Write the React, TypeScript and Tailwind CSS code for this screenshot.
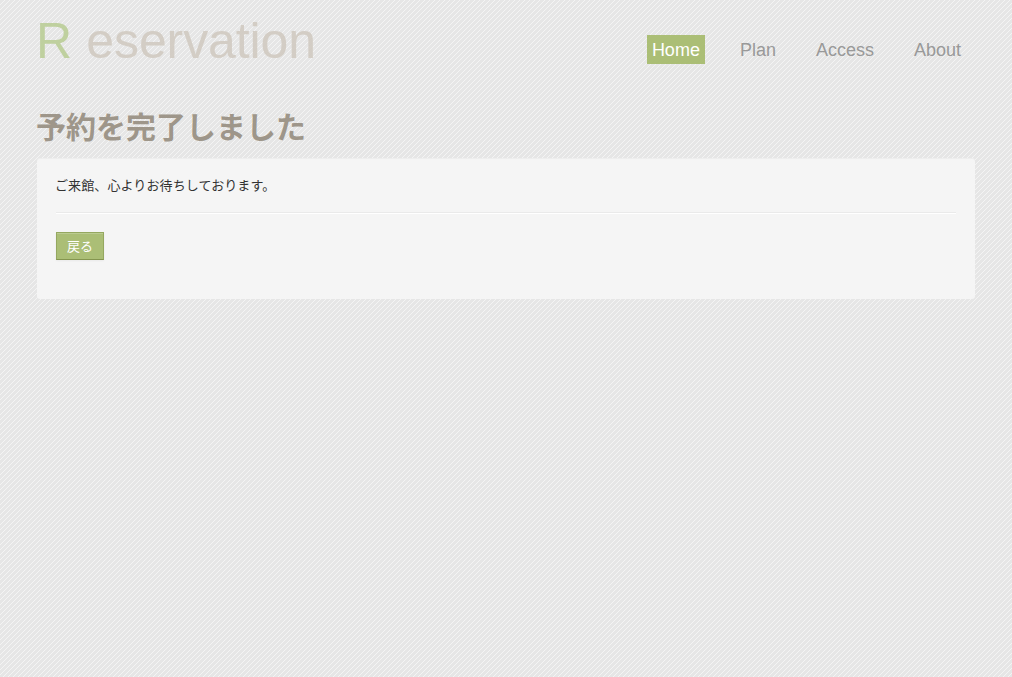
const links = ["Home", "Plan", "Access", "About"];

export default function App() {
  return (
    <div className="min-h-[677px] bg-[#e6e6e6] bg-[linear-gradient(135deg,#e6e6e6_0_3.2px,#f4f4f4_3.2px_3.9px,#e6e6e6_3.9px)] bg-[length:5px_5px] px-[37px] font-['Liberation_Sans','Noto_Sans_CJK_JP',sans-serif] text-[13px] text-[#333]">
      <header className="flex h-[105px] items-start justify-between">
        <h1 className="-ml-px mt-[11px] whitespace-pre text-[50px] leading-[60px] tracking-[-0.1px] text-[#d3cdc5]">
          <span className="tracking-[0.4px] text-[#bfd09f]">R</span> eservation
        </h1>
        <nav className="mt-[35px] mr-[9px] flex gap-[30px] text-[18px] leading-[27px] text-[#999]">
          {links.map((name) => (
            <a key={name} href="#" className={name === "Home" ? "bg-[#abbe76] px-[5px] pt-[2px] text-white" : "px-[5px] pt-[2px]"}>
              {name}
            </a>
          ))}
        </nav>
      </header>
      <h2 className="-ml-px h-[53px] pt-px text-[30px] leading-[44px] font-bold text-[#9e968a]">予約を完了しました</h2>
      <main className="h-[141px] rounded-[3px] bg-[#f5f5f5] px-[19px] pt-[19px] shadow-[inset_0_1px_1px_rgba(0,0,0,0.03)]">
        <p className="-ml-px leading-[18px] tracking-[0.1px]">ご来館、心よりお待ちしております。</p>
        <hr className="mt-[17px] mb-[18px] h-[2px] border-t border-b border-t-[#eaeaea] border-b-white" />
        <button className="block h-[28px] w-[48px] border border-[#95a860] border-b-[#84954f] bg-[#abbe76] pt-px text-white shadow-[inset_0_1px_0_rgba(255,255,255,0.2),0_1px_2px_rgba(0,0,0,0.05)]">
          戻る
        </button>
      </main>
    </div>
  );
}
